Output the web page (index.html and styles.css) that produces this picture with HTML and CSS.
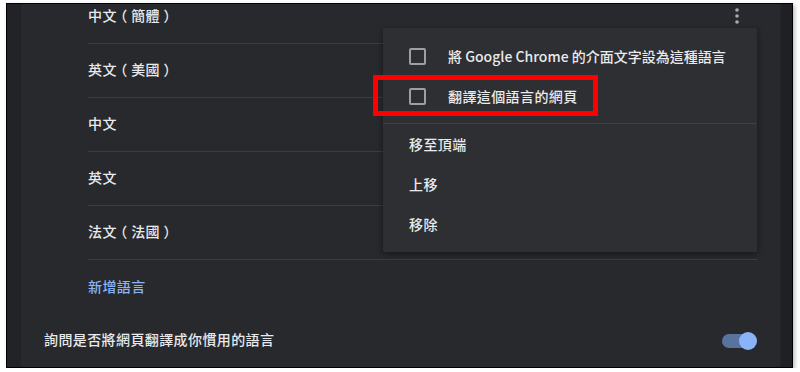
FILE: index.html
```html
<!DOCTYPE html>
<html lang="zh-Hant">
<head>
<meta charset="utf-8">
<link rel="stylesheet" href="styles.css">
</head>
<body>
<div class="frame">
  <div class="side-left"></div>
  <div class="panel">
    <div class="lang-list">
      <div class="lang-row">
        <span class="name">中文<span class="paren">（</span>簡體<span class="paren">）</span></span>
        <span class="more" aria-label="更多動作">
          <svg width="4" height="16" viewBox="0 0 4 16"><circle cx="2" cy="2" r="1.8"/><circle cx="2" cy="8" r="1.8"/><circle cx="2" cy="14" r="1.8"/></svg>
        </span>
      </div>
      <div class="lang-row"><span class="name">英文<span class="paren">（</span>美國<span class="paren">）</span></span></div>
      <div class="lang-row"><span class="name">中文</span></div>
      <div class="lang-row"><span class="name">英文</span></div>
      <div class="lang-row"><span class="name">法文<span class="paren">（</span>法國<span class="paren">）</span></span></div>
      <div class="add-row"><span class="link">新增語言</span></div>
    </div>
    <div class="setting-row">
      <span>詢問是否將網頁翻譯成你慣用的語言</span>
      <span class="toggle"><span class="track"></span><span class="knob"></span></span>
    </div>
  </div>
  <div class="side-right"></div>

  <div class="menu">
    <div class="menu-item check"><span class="box"></span><span class="tight">將 Google Chrome 的介面文字設為這種語言</span></div>
    <div class="menu-item check"><span class="box"></span><span>翻譯這個語言的網頁</span></div>
    <div class="menu-sep"></div>
    <div class="menu-item">移至頂端</div>
    <div class="menu-item">上移</div>
    <div class="menu-item">移除</div>
  </div>
  <div class="highlight"></div>
</div>
</body>
</html>
```

FILE: styles.css
```css
html, body {
  margin: 0;
  padding: 0;
  background: #ffffff;
}

body {
  font-family: "Noto Sans CJK TC", "Noto Sans", sans-serif;
  font-size: 14px;
  font-weight: 500;
  letter-spacing: 0.4px;
  color: #e8eaed;
}

.frame {
  position: relative;
  margin: 3px 0 0 6px;
  width: 785px;
  height: 363px;
  border: 1px solid #000;
  background: #202124;
  overflow: hidden;
  display: flex;
  box-shadow: 2px 2px 4px rgba(0, 0, 0, 0.25);
}

.side-left {
  width: 14px;
  flex: none;
  background: #222326;
}

.panel {
  width: 759px;
  flex: none;
  background: #28292c;
  display: flex;
  flex-direction: column;
}

.side-right {
  flex: 1;
  background: #1f2023;
  border-left: 1px solid #242528;
}

.lang-list {
  margin: -14px 23px 0 67px;
}

.lang-row {
  height: 54px;
  box-sizing: border-box;
  padding-bottom: 4px;
  border-bottom: 1px solid #3c3d40;
  display: flex;
  align-items: center;
  justify-content: space-between;
}

.name {
  white-space: nowrap;
  flex: none;
}

.paren {
  font-feature-settings: "halt";
  margin: 0 3.5px;
}

.more {
  width: 40px;
  display: flex;
  justify-content: center;
  padding-top: 2px;
}

.more svg {
  fill: #a8acb1;
  display: block;
}

.add-row {
  height: 54px;
  box-sizing: border-box;
  padding-bottom: 2px;
  display: flex;
  align-items: center;
}

.link {
  color: #8ab4f8;
}

.setting-row {
  height: 53px;
  box-sizing: border-box;
  padding: 0 23px 3px;
  display: flex;
  align-items: center;
  justify-content: space-between;
}

.toggle {
  position: relative;
  width: 35px;
  height: 18px;
  margin-top: 3px;
  display: flex;
  align-items: center;
}

.track {
  width: 28px;
  height: 14px;
  border-radius: 7px;
  background: #58739e;
}

.knob {
  position: absolute;
  right: 0;
  top: 0;
  width: 18px;
  height: 18px;
  border-radius: 50%;
  background: #8ab4f8;
}

.menu {
  position: absolute;
  left: 376px;
  top: 24px;
  width: 374px;
  padding: 8px 0 7px;
  background: #2e2f32;
  box-shadow: 0 2px 6px rgba(0, 0, 0, 0.45);
  border-radius: 2px;
}

.menu-item {
  height: 40px;
  box-sizing: border-box;
  padding: 0 0 2px 26px;
  display: flex;
  align-items: center;
}

.menu-item.check {
  padding-bottom: 0;
}

.tight {
  letter-spacing: 0;
}

.box {
  width: 17px;
  height: 17px;
  box-sizing: border-box;
  border: 2px solid #9aa0a6;
  border-radius: 2px;
  margin-right: 22px;
  flex: none;
}

.menu-sep {
  height: 1px;
  background: #3f4043;
  margin: 7px 0 1px;
}

.highlight {
  position: absolute;
  left: 366px;
  top: 71px;
  width: 225px;
  height: 41px;
  box-sizing: border-box;
  border: 5px solid #ff0000;
}
```
